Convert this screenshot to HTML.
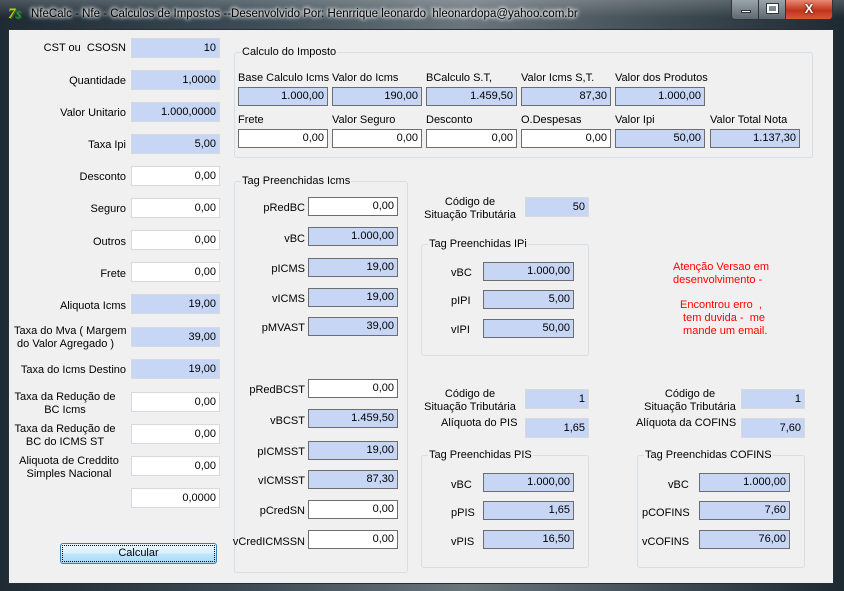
<!DOCTYPE html>
<html><head><meta charset="utf-8"><style>
*{margin:0;padding:0;box-sizing:border-box}
body{width:844px;height:591px;overflow:hidden;background:#1b2630;font-family:"Liberation Sans",sans-serif;font-size:11px;color:#000;position:relative}
.frame{position:absolute;left:0;top:0;width:844px;height:591px;background:linear-gradient(90deg,#1e2a34 0%,#3d4c56 30%,#6a757c 55%,#3e4a52 80%,#1e2a32 100%)}
.tb{position:absolute;left:0;top:0;width:844px;height:29px;background:linear-gradient(180deg,rgba(255,255,255,.2),rgba(255,255,255,0) 60%)}
.title{position:absolute;left:31px;top:8px;color:#000;font-size:11.5px;text-shadow:0 0 6px #fff,0 0 4px #fff,0 0 3px #fff}
.client{position:absolute;left:8px;top:29px;width:826px;height:555px;background:#f0f0f0;border:1px solid #2a2f33}
.a{position:absolute}
.l{position:absolute;white-space:nowrap;line-height:13px;padding-top:1px}
.r{text-align:right}
.c{text-align:center}
.f{position:absolute;height:19px;border:1px solid #6d6d6d;background:#fff;text-align:right;padding-right:3px;line-height:17px}
.b{background:#c6d6f4}
.s{border:1px solid #d6dade;line-height:19px;height:20px}
.g{position:absolute;border:1px solid #d5dfe5;border-radius:3px}
.gt{position:absolute;top:-7px;left:6px;background:#f0f0f0;padding:0 1px;line-height:13px;white-space:nowrap}
.red{color:#f00}
.btn{position:absolute;top:0;height:20px;border:1px solid #333;border-top:none}
</style></head><body>
<div class="frame"></div><div class="tb"></div>
<div class="a" style="left:8px;top:6px;width:18px;height:18px;font:bold italic 15px 'Liberation Serif',serif;color:#e0c000;text-shadow:1px 1px 0 #2a7a20">7<span style="color:#2a9a30;font-size:11px">$</span></div>
<div class="title">NfeCalc - Nfe - Calculos de Impostos --Desenvolvido Por: Henrrique leonardo&nbsp; hleonardopa@yahoo.com.br</div>
<div class="btn" style="left:731px;width:28px;border-radius:0 0 0 4px;background:linear-gradient(#9aa4ab,#5d6870)"><div class="a" style="left:9px;top:10px;width:10px;height:3px;background:#fff;border:1px solid #333"></div></div>
<div class="btn" style="left:758px;width:28px;background:linear-gradient(#9aa4ab,#5d6870)"><div class="a" style="left:8px;top:4px;width:11px;height:9px;border:2px solid #fff;outline:1px solid #333"></div></div>
<div class="btn" style="left:785px;width:48px;border-radius:0 0 4px 0;background:linear-gradient(#e88a70,#c0341a 55%,#d8583a);color:#fff;font:bold 13px 'Liberation Sans';text-align:center;line-height:18px;text-shadow:0 0 2px #000">X</div>
<div class="client"></div>

<!-- left column -->
<div class="l r" style="left:10px;width:116px;top:41px">CST ou &nbsp;CSOSN</div><div class="f b s" style="left:131px;top:38px;width:89px">10</div>
<div class="l r" style="left:10px;width:116px;top:74px">Quantidade</div><div class="f b s" style="left:131px;top:70px;width:89px">1,0000</div>
<div class="l r" style="left:10px;width:116px;top:106px">Valor Unitario</div><div class="f b s" style="left:131px;top:102px;width:89px">1.000,0000</div>
<div class="l r" style="left:10px;width:116px;top:138px">Taxa Ipi</div><div class="f b s" style="left:131px;top:134px;width:89px">5,00</div>
<div class="l r" style="left:10px;width:116px;top:170px">Desconto</div><div class="f s" style="left:131px;top:166px;width:89px">0,00</div>
<div class="l r" style="left:10px;width:116px;top:202px">Seguro</div><div class="f s" style="left:131px;top:198px;width:89px">0,00</div>
<div class="l r" style="left:10px;width:116px;top:235px">Outros</div><div class="f s" style="left:131px;top:230px;width:89px">0,00</div>
<div class="l r" style="left:10px;width:116px;top:267px">Frete</div><div class="f s" style="left:131px;top:262px;width:89px">0,00</div>
<div class="l r" style="left:10px;width:116px;top:299px">Aliquota Icms</div><div class="f b s" style="left:131px;top:294px;width:89px">19,00</div>
<div class="l" style="left:14px;top:324px">Taxa do Mva ( Margem<br>&nbsp;do Valor Agregado )</div><div class="f b s" style="left:131px;top:327px;width:89px">39,00</div>
<div class="l r" style="left:10px;width:116px;top:363px">Taxa do Icms Destino</div><div class="f b s" style="left:131px;top:359px;width:89px">19,00</div>
<div class="l c" style="left:10px;width:110px;top:390px">Taxa da Redução de<br>BC Icms</div><div class="f s" style="left:131px;top:392px;width:89px">0,00</div>
<div class="l c" style="left:10px;width:110px;top:422px">Taxa da Redução de<br>BC do ICMS ST</div><div class="f s" style="left:131px;top:424px;width:89px">0,00</div>
<div class="l c" style="left:18px;width:102px;top:454px">Aliquota de Creddito<br>Simples Nacional</div><div class="f s" style="left:131px;top:456px;width:89px">0,00</div>
<div class="f s" style="left:131px;top:488px;width:89px">0,0000</div>
<div class="a c" style="left:60px;top:543px;width:157px;height:21px;border:1px solid #3c7fb1;border-radius:3px;background:linear-gradient(#eaf6fd,#d9f0fc 50%,#bee6fd 51%,#a7d9f5);line-height:19px;outline:1px dotted #000;outline-offset:-3px">Calcular</div>

<!-- Calculo do Imposto -->
<div class="g" style="left:234px;top:52px;width:579px;height:106px"><div class="gt">Calculo do Imposto</div></div>
<div class="l" style="left:238px;top:71px">Base Calculo Icms</div><div class="f b" style="left:238px;top:87px;width:90px">1.000,00</div>
<div class="l" style="left:332px;top:71px">Valor do Icms</div><div class="f b" style="left:332px;top:87px;width:90px">190,00</div>
<div class="l" style="left:426px;top:71px">BCalculo S.T,</div><div class="f b" style="left:426px;top:87px;width:91px">1.459,50</div>
<div class="l" style="left:521px;top:71px">Valor Icms S,T.</div><div class="f b" style="left:521px;top:87px;width:90px">87,30</div>
<div class="l" style="left:615px;top:71px">Valor dos Produtos</div><div class="f b" style="left:615px;top:87px;width:90px">1.000,00</div>
<div class="l" style="left:238px;top:113px">Frete</div><div class="f" style="left:238px;top:129px;width:90px">0,00</div>
<div class="l" style="left:332px;top:113px">Valor Seguro</div><div class="f" style="left:332px;top:129px;width:90px">0,00</div>
<div class="l" style="left:426px;top:113px">Desconto</div><div class="f" style="left:426px;top:129px;width:91px">0,00</div>
<div class="l" style="left:521px;top:113px">O.Despesas</div><div class="f" style="left:521px;top:129px;width:90px">0,00</div>
<div class="l" style="left:615px;top:113px">Valor Ipi</div><div class="f b" style="left:615px;top:129px;width:90px">50,00</div>
<div class="l" style="left:710px;top:113px">Valor Total Nota</div><div class="f b" style="left:710px;top:129px;width:90px">1.137,30</div>

<!-- Icms -->
<div class="g" style="left:234px;top:181px;width:174px;height:392px"><div class="gt">Tag Preenchidas Icms</div></div>
<div class="l r" style="left:240px;width:65px;top:201px">pRedBC</div><div class="f" style="left:308px;top:197px;width:90px">0,00</div>
<div class="l r" style="left:240px;width:65px;top:232px">vBC</div><div class="f b" style="left:308px;top:227px;width:90px">1.000,00</div>
<div class="l r" style="left:240px;width:65px;top:262px">pICMS</div><div class="f b" style="left:308px;top:258px;width:90px">19,00</div>
<div class="l r" style="left:240px;width:65px;top:292px">vICMS</div><div class="f b" style="left:308px;top:288px;width:90px">19,00</div>
<div class="l r" style="left:240px;width:65px;top:321px">pMVAST</div><div class="f b" style="left:308px;top:317px;width:90px">39,00</div>
<div class="l r" style="left:240px;width:65px;top:383px">pRedBCST</div><div class="f" style="left:308px;top:379px;width:90px">0,00</div>
<div class="l r" style="left:240px;width:65px;top:414px">vBCST</div><div class="f b" style="left:308px;top:409px;width:90px">1.459,50</div>
<div class="l r" style="left:240px;width:65px;top:445px">pICMSST</div><div class="f b" style="left:308px;top:441px;width:90px">19,00</div>
<div class="l r" style="left:240px;width:65px;top:474px">vICMSST</div><div class="f b" style="left:308px;top:470px;width:90px">87,30</div>
<div class="l r" style="left:240px;width:65px;top:504px">pCredSN</div><div class="f" style="left:308px;top:500px;width:90px">0,00</div>
<div class="l r" style="left:230px;width:75px;top:535px">vCredICMSSN</div><div class="f" style="left:308px;top:530px;width:90px">0,00</div>

<!-- IPI -->
<div class="l c" style="left:420px;width:100px;top:195px">Código de<br>Situação Tributária</div><div class="f b s" style="left:525px;top:197px;width:64px">50</div>
<div class="g" style="left:421px;top:244px;width:168px;height:112px"><div class="gt">Tag Preenchidas IPi</div></div>
<div class="l" style="left:451px;top:266px">vBC</div><div class="f b" style="left:483px;top:262px;width:91px">1.000,00</div>
<div class="l" style="left:451px;top:294px">pIPI</div><div class="f b" style="left:483px;top:290px;width:91px">5,00</div>
<div class="l" style="left:451px;top:323px">vIPI</div><div class="f b" style="left:483px;top:319px;width:91px">50,00</div>

<div class="l red" style="left:673px;top:260px">Atenção Versao em<br>desenvolvimento -</div>
<div class="l red" style="left:680px;top:298px">Encontrou erro &nbsp;,<br>&nbsp;tem duvida - &nbsp;me<br>&nbsp;mande um email.</div>

<!-- PIS -->
<div class="l c" style="left:420px;width:100px;top:387px">Código de<br>Situação Tributária</div><div class="f b s" style="left:525px;top:389px;width:64px">1</div>
<div class="l" style="left:441px;top:416px">Alíquota do PIS</div><div class="f b s" style="left:525px;top:418px;width:64px">1,65</div>
<div class="g" style="left:421px;top:455px;width:168px;height:113px"><div class="gt">Tag Preenchidas PIS</div></div>
<div class="l" style="left:451px;top:478px">vBC</div><div class="f b" style="left:483px;top:473px;width:91px">1.000,00</div>
<div class="l" style="left:451px;top:506px">pPIS</div><div class="f b" style="left:483px;top:501px;width:91px">1,65</div>
<div class="l" style="left:451px;top:535px">vPIS</div><div class="f b" style="left:483px;top:530px;width:91px">16,50</div>

<!-- COFINS -->
<div class="l c" style="left:640px;width:100px;top:387px">Código de<br>Situação Tributária</div><div class="f b s" style="left:741px;top:389px;width:64px">1</div>
<div class="l" style="left:636px;top:416px">Alíquota da COFINS</div><div class="f b s" style="left:741px;top:418px;width:64px">7,60</div>
<div class="g" style="left:637px;top:455px;width:168px;height:113px"><div class="gt">Tag Preenchidas COFINS</div></div>
<div class="l" style="left:668px;top:478px">vBC</div><div class="f b" style="left:699px;top:473px;width:91px">1.000,00</div>
<div class="l" style="left:642px;top:506px">pCOFINS</div><div class="f b" style="left:699px;top:501px;width:91px">7,60</div>
<div class="l" style="left:642px;top:535px">vCOFINS</div><div class="f b" style="left:699px;top:530px;width:91px">76,00</div>
</body></html>
